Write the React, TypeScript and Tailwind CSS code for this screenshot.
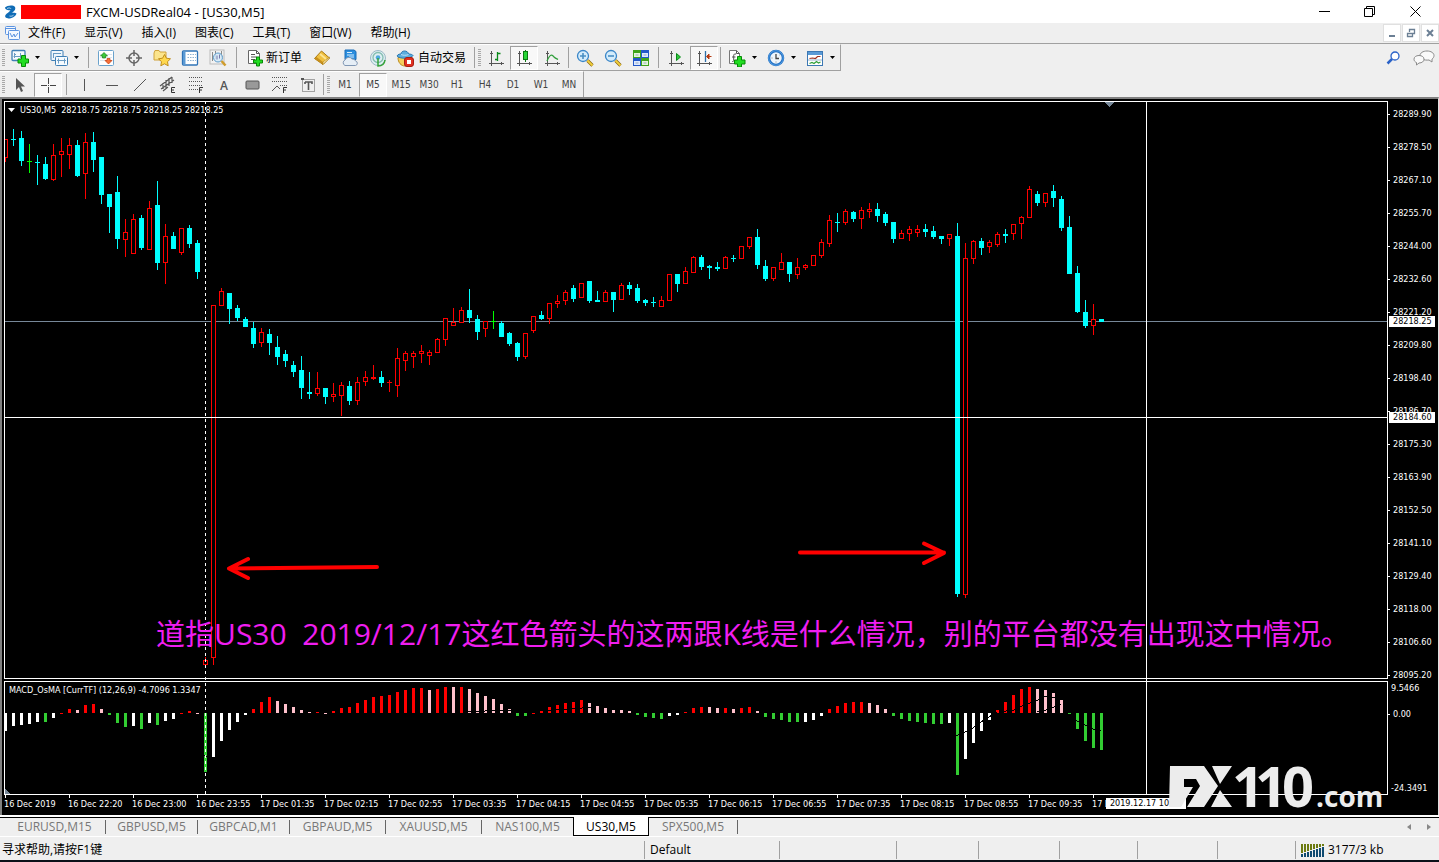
import React from 'react';

type Candle = [kind: 'c' | 'r' | 'g', high: number, top: number, bottom: number, low: number];
type Bar = [kind: 'w' | 'g' | 'r' | 'p', value: number];

const CANDLES: Candle[] = [
  ['r', 139, 139, 158, 162], ['c', 129, 139, 140, 146], ['c', 131, 138, 161, 166], ['g', 144, 161, 162, 173],
  ['c', 155, 162, 163, 185], ['c', 157, 164, 179, 180], ['r', 144, 155, 180, 181], ['r', 138, 151, 155, 177],
  ['r', 138, 145, 155, 169], ['c', 140, 145, 176, 177], ['r', 133, 142, 174, 199], ['c', 132, 142, 160, 172],
  ['c', 157, 157, 195, 204], ['c', 194, 194, 207, 233], ['c', 176, 192, 239, 249], ['r', 219, 232, 240, 257],
  ['r', 214, 219, 254, 254], ['c', 215, 218, 248, 250], ['r', 201, 208, 250, 250], ['c', 181, 205, 263, 270],
  ['r', 224, 236, 263, 284], ['c', 232, 236, 249, 249], ['r', 228, 228, 253, 255], ['c', 225, 228, 244, 248],
  ['c', 240, 243, 272, 279], ['r', 657, 660, 665, 665], ['r', 305, 305, 658, 665], ['r', 288, 291, 306, 306],
  ['c', 293, 293, 309, 324], ['c', 305, 308, 318, 321], ['c', 317, 319, 327, 327], ['c', 322, 328, 344, 348],
  ['r', 328, 332, 343, 347], ['c', 329, 334, 343, 355], ['c', 336, 347, 357, 365], ['c', 350, 354, 361, 367],
  ['c', 361, 365, 372, 377], ['c', 356, 370, 388, 399], ['c', 372, 392, 394, 399], ['r', 372, 388, 394, 396],
  ['c', 388, 388, 397, 404], ['r', 383, 394, 397, 402], ['r', 382, 385, 396, 416], ['c', 381, 386, 401, 405],
  ['r', 377, 382, 401, 405], ['r', 371, 377, 382, 386], ['r', 365, 377, 379, 380], ['c', 371, 377, 383, 387],
  ['r', 380, 382, 383, 392], ['r', 348, 358, 386, 397], ['r', 351, 353, 361, 371], ['r', 351, 353, 357, 368],
  ['r', 345, 351, 354, 363], ['r', 350, 352, 356, 365], ['r', 338, 339, 353, 353], ['r', 318, 318, 340, 346],
  ['r', 308, 322, 326, 326], ['r', 307, 310, 323, 323], ['c', 289, 310, 318, 323], ['c', 315, 319, 332, 340],
  ['r', 321, 321, 329, 337], ['g', 311, 321, 322, 329], ['c', 321, 323, 337, 337], ['c', 332, 333, 344, 346],
  ['c', 342, 343, 357, 361], ['r', 333, 333, 357, 359], ['r', 316, 316, 331, 333], ['c', 311, 315, 319, 320],
  ['r', 303, 303, 319, 324], ['r', 295, 301, 304, 308], ['r', 290, 292, 301, 305], ['c', 285, 288, 299, 302],
  ['r', 283, 283, 298, 298], ['c', 281, 281, 301, 303], ['c', 291, 300, 302, 302], ['r', 290, 292, 302, 302],
  ['c', 292, 292, 300, 312], ['r', 283, 285, 300, 300], ['c', 282, 285, 289, 295], ['c', 284, 288, 301, 303],
  ['c', 299, 300, 303, 306], ['c', 297, 302, 303, 307], ['r', 296, 300, 307, 307], ['r', 274, 274, 301, 301],
  ['c', 274, 274, 284, 292], ['r', 267, 271, 284, 284], ['r', 256, 257, 273, 273], ['c', 255, 257, 267, 270],
  ['c', 265, 266, 268, 279], ['c', 262, 267, 269, 271], ['r', 256, 257, 269, 269], ['c', 255, 258, 259, 262],
  ['r', 246, 246, 259, 259], ['r', 237, 237, 247, 249], ['c', 229, 237, 265, 269], ['c', 260, 266, 279, 281],
  ['r', 267, 267, 279, 281], ['r', 253, 262, 270, 270], ['c', 262, 262, 274, 282], ['r', 258, 267, 275, 279],
  ['r', 264, 265, 268, 270], ['r', 255, 255, 266, 266], ['r', 239, 242, 256, 258], ['r', 215, 220, 244, 247],
  ['c', 213, 222, 223, 232], ['r', 209, 211, 223, 225], ['c', 211, 212, 219, 222], ['r', 207, 210, 219, 229],
  ['r', 203, 209, 212, 218], ['c', 203, 209, 216, 222], ['c', 212, 214, 223, 226], ['c', 222, 222, 239, 243],
  ['r', 230, 233, 239, 239], ['r', 226, 229, 234, 241], ['r', 225, 229, 233, 237], ['c', 224, 229, 232, 237],
  ['c', 226, 231, 237, 239], ['c', 236, 236, 239, 244], ['r', 234, 234, 239, 246], ['c', 223, 236, 594, 597],
  ['r', 243, 258, 595, 598], ['r', 240, 241, 259, 264], ['c', 238, 241, 248, 255], ['r', 240, 242, 247, 253],
  ['r', 232, 234, 245, 247], ['c', 229, 234, 236, 243], ['r', 224, 224, 234, 240], ['r', 216, 217, 224, 239],
  ['r', 186, 189, 218, 218], ['c', 191, 194, 203, 206], ['r', 193, 193, 203, 207], ['c', 185, 191, 198, 207],
  ['c', 196, 199, 228, 231], ['c', 216, 227, 274, 274], ['c', 266, 273, 312, 313], ['c', 300, 312, 326, 328],
  ['r', 304, 319, 326, 335], ['c', 319, 319, 322, 322],
];

const BARS: Bar[] = [
  ['w', -18], ['w', -13], ['w', -12], ['w', -11], ['w', -9], ['g', -9], ['w', -5], ['r', 0], ['r', 4], ['p', 3],
  ['r', 8], ['r', 9], ['p', 4], ['g', -2], ['g', -10], ['g', -14], ['w', -13], ['g', -16], ['w', -10], ['g', -12],
  ['w', -8], ['w', -6], ['r', 0], ['r', 2], ['p', 0], ['g', -59], ['w', -44], ['w', -28], ['w', -17], ['w', -9],
  ['w', -2], ['r', 4], ['r', 11], ['r', 16], ['p', 12], ['p', 9], ['p', 6], ['p', 3], ['p', 1], ['r', 1],
  ['p', 0], ['r', 2], ['r', 5], ['r', 6], ['r', 10], ['r', 13], ['r', 16], ['r', 17], ['r', 18], ['r', 21],
  ['r', 23], ['r', 25], ['r', 25], ['p', 23], ['r', 24], ['r', 26], ['p', 26], ['r', 26], ['p', 24], ['p', 20],
  ['p', 17], ['p', 14], ['p', 9], ['p', 4], ['g', -3], ['g', -3], ['r', 0], ['r', 2], ['r', 6], ['r', 8],
  ['r', 10], ['r', 11], ['r', 13], ['p', 10], ['p', 7], ['p', 5], ['p', 3], ['p', 3], ['p', 2], ['g', -2],
  ['g', -4], ['g', -5], ['g', -6], ['w', -3], ['w', -2], ['r', 1], ['r', 5], ['r', 6], ['p', 6], ['p', 5],
  ['r', 5], ['p', 4], ['r', 5], ['r', 6], ['p', 2], ['g', -4], ['g', -6], ['g', -7], ['g', -9], ['g', -9],
  ['w', -9], ['w', -7], ['w', -3], ['r', 4], ['r', 7], ['r', 10], ['r', 11], ['r', 11], ['p', 10], ['p', 8],
  ['p', 4], ['g', -3], ['g', -6], ['g', -8], ['g', -9], ['g', -10], ['g', -11], ['g', -11], ['w', -10], ['g', -62],
  ['w', -46], ['w', -30], ['w', -18], ['w', -7], ['r', 3], ['r', 11], ['r', 18], ['r', 24], ['r', 26], ['p', 24],
  ['p', 23], ['p', 20], ['p', 13], ['g', -1], ['g', -16], ['g', -28], ['g', -35], ['g', -37],
];

const CANDLE_COLORS = { c: '#00ffff', r: '#ff0000', g: '#00ff00' };
const BAR_COLORS = { w: '#ffffff', g: '#32cd32', r: '#ff0000', p: '#ffc0cb' };

const PRICES = [
  '28289.90', '28278.50', '28267.10', '28255.70', '28244.00', '28232.60', '28221.20', '28209.80', '28198.40',
  '28186.70', '28175.30', '28163.90', '28152.50', '28141.10', '28129.40', '28118.00', '28106.60', '28095.20',
];

const TIMES = [
  '16 Dec 2019', '16 Dec 22:20', '16 Dec 23:00', '16 Dec 23:55', '17 Dec 01:35', '17 Dec 02:15', '17 Dec 02:55',
  '17 Dec 03:35', '17 Dec 04:15', '17 Dec 04:55', '17 Dec 05:35', '17 Dec 06:15', '17 Dec 06:55', '17 Dec 07:35',
  '17 Dec 08:15', '17 Dec 08:55', '17 Dec 09:35', '17 Dec 10:15',
];

const MENUS = ['文件(F)', '显示(V)', '插入(I)', '图表(C)', '工具(T)', '窗口(W)', '帮助(H)'];
const PERIODS = ['M1', 'M5', 'M15', 'M30', 'H1', 'H4', 'D1', 'W1', 'MN'];

const TABS = [
  { name: 'EURUSD,M15', width: 'w-[102px]' },
  { name: 'GBPUSD,M5', width: 'w-[92px]' },
  { name: 'GBPCAD,M1', width: 'w-[92px]' },
  { name: 'GBPAUD,M5', width: 'w-[96px]' },
  { name: 'XAUUSD,M5', width: 'w-[96px]' },
  { name: 'NAS100,M5', width: 'w-[91px]' },
  { name: 'US30,M5', width: 'w-[76px]' },
  { name: 'SPX500,M5', width: 'w-[89px]' },
];

const STATUS_CELLS = ['w-[117px]', 'w-[82px]', 'w-[81px]', 'w-[78px]', 'w-[80px]', 'w-[78px]'];

const PRESSED = 'border border-[#a0a0a0] border-r-white border-b-white bg-[#f8f8f8]';

/* ---------- icons ---------- */

function Icon({ children, size = 18 }: { children: React.ReactNode; size?: number }) {
  return (
    <svg width={size} height={size} viewBox="0 0 18 18" fill="none" className="shrink-0" aria-hidden="true">
      {children}
    </svg>
  );
}

function Plus({ x, y }: { x: number; y: number }) {
  return (
    <path
      d={`M${x + 3.5} ${y + 0.5}h3v3h3v3h-3v3h-3v-3h-3v-3h3z`}
      fill="#22dd22"
      stroke="#078a07"
    />
  );
}

function Caret() {
  return (
    <svg width="5" height="3" viewBox="0 0 5 3" className="shrink-0" aria-hidden="true">
      <path d="M0 0h5L2.5 3z" fill="#000" />
    </svg>
  );
}

function Axes() {
  return (
    <g stroke="#555" strokeWidth="1">
      <path d="M4.500 2v15M2 14.500h15" />
      <path d="M3 4.500h3M14.500 13v3" />
    </g>
  );
}

const icons = {
  newChart: (
    <Icon>
      <rect x="1" y="1.500" width="13" height="10" rx="1" fill="#f4f9fd" stroke="#3f7fb5" strokeWidth="1.300" />
      <path d="M3.500 4v5M2.500 7.500h9M9.500 4v5M3 5.500h2" stroke="#6a9cc4" />
      <path d="M10.500 6.500h4v3.500h3v4h-3v3.500h-4V14H7v-4h3.500z" fill="#22dd22" stroke="#078a07" />
    </Icon>
  ),
  profiles: (
    <Icon>
      <rect x="1" y="1.500" width="12" height="10" rx="1" fill="#eef6fc" stroke="#3f7fb5" />
      <path d="M3 4.500h8M3.500 4v5" stroke="#6a9cc4" />
      <rect x="5.500" y="7.500" width="12" height="9" rx="1" fill="#f6fbff" stroke="#3f7fb5" />
      <path d="M7 11.500h9M8.500 9.500v5M14.500 9.500v5" stroke="#6a9cc4" />
    </Icon>
  ),
  market: (
    <Icon>
      <rect x="1.500" y="1.500" width="15" height="15" rx="1" fill="#fff" stroke="#6aa2cc" />
      <path d="M3 5.500h12M3 8.500h12M3 11.500h12" stroke="#dce6ee" />
      <path d="M7 3.500l3.500 3.500H8.500v2h-3V7H3.500z" fill="#3cc83c" stroke="#15801a" strokeWidth=".7" />
      <path d="M11.500 15L8 11.500H10V9.500h3v2h2z" fill="#f87038" stroke="#c03a10" strokeWidth=".7" />
    </Icon>
  ),
  crosshair: (
    <Icon>
      <circle cx="9" cy="9" r="5" stroke="#666" strokeWidth="1.500" />
      <path d="M9 1v6M9 11v6M1 9h6M11 9h6" stroke="#666" strokeWidth="1.500" />
    </Icon>
  ),
  favorites: (
    <Icon>
      <path d="M1 4l1-2.500h4L7 3h6v8H1z" fill="#fbe48c" stroke="#cfa23b" />
      <path d="M11.500 5.500l1.900 3.700 4.100.6-3 2.900.7 4.100-3.700-2-3.700 2 .7-4.100-3-2.900 4.100-.6z" fill="#ffd84e" stroke="#b98512" strokeWidth=".9" />
    </Icon>
  ),
  terminal: (
    <Icon>
      <rect x="1.500" y="2" width="15" height="14" rx="1" fill="#fff" stroke="#2f74b8" strokeWidth="1.300" />
      <rect x="2" y="2.500" width="2.500" height="13" fill="#5b9ad4" />
      <path d="M6.500 5.500h8.500M6.500 8.500h8.500M6.500 11.500h8.500" stroke="#8fb3d3" strokeDasharray="1.500 1" />
    </Icon>
  ),
  tester: (
    <Icon>
      <rect x="1" y="1" width="14" height="14" fill="#f2f2f2" stroke="#bbb" />
      <path d="M3.500 3v9M6.500 2v8M12.500 2v7" stroke="#8a8a8a" />
      <circle cx="9" cy="8.500" r="4.500" fill="#d5ebfa" fillOpacity=".85" stroke="#5c9bc9" />
      <path d="M8 6.500v4M10.500 5.500v4" stroke="#77a" />
      <path d="M12.500 12l4 4.500" stroke="#cf9c2c" strokeWidth="2.500" />
    </Icon>
  ),
  order: (
    <Icon>
      <path d="M2.500 1.500h8l3 3v10h-11z" fill="#fff" stroke="#666" />
      <path d="M10.500 1.500v3h3M5 5.500h4M5 8h6M5 10.500h4" stroke="#555" />
      <Plus x={7} y={7.500} />
    </Icon>
  ),
  book: (
    <Icon>
      <path d="M1.500 9.500l7-7.500 8 7-6.500 6.500z" fill="#f0c040" stroke="#a97a12" />
      <path d="M1.500 9.500l8.500 6v-2.500L3.500 8z" fill="#c8901c" />
      <path d="M10 15.500l6.500-6.500v-1L10 13z" fill="#fff1b8" stroke="#a97a12" strokeWidth=".6" />
      <path d="M7 5l6 5" stroke="#fbe493" strokeWidth="2" />
    </Icon>
  ),
  cloud: (
    <Icon>
      <path d="M4 1h9l2 1.500v8H4z" fill="#2b8ede" stroke="#1a6cb8" />
      <path d="M6 3.500h5M6 6h7M8 8h5" stroke="#d9efff" />
      <path d="M4 16.500a3 3 0 0 1 0-5.500 4 4 0 0 1 7-1 3 3 0 0 1 3.500 2 2.300 2.300 0 0 1 0 4.500z" fill="#e6eef6" stroke="#8097b4" />
    </Icon>
  ),
  signal: (
    <Icon>
      <circle cx="9" cy="9" r="7.500" fill="#dfeff2" stroke="#9bb9c6" />
      <circle cx="9" cy="8.500" r="5" stroke="#84bdb0" strokeWidth="1.300" />
      <circle cx="9" cy="8.500" r="2.300" fill="#4fa9de" />
      <path d="M9 9v8c4 0 6.500-2 7-6" stroke="#35a339" strokeWidth="1.500" />
    </Icon>
  ),
  auto: (
    <Icon>
      <path d="M2 8.500c0 5 3 8.500 7 8.500s7-3 7-8.500z" fill="#f5cf5c" stroke="#b98a20" />
      <path d="M1 7c1-2 3-2 4-2 0-4 7-4 7.500 0 2 0 4 .5 4.500 1.500-1 3-13 4-16 .5z" fill="#5badde" stroke="#2a78b4" />
      <path d="M5 5.500c2 1 5.500 1 7.500 0" stroke="#bfe2f8" />
      <rect x="8.500" y="8.500" width="9" height="9" rx="2.500" fill="#e03020" stroke="#a81c10" />
      <rect x="11" y="11" width="4" height="4" fill="#fff" />
    </Icon>
  ),
  bars: (
    <Icon>
      <Axes />
      <path d="M10.500 3v9M10.500 4.500h3M8 10.500h3" stroke="#0a8a1a" strokeWidth="1.300" />
    </Icon>
  ),
  candles: (
    <Icon>
      <Axes />
      <path d="M10.500 1v12" stroke="#0a7a12" />
      <rect x="8.500" y="2.500" width="4" height="8" fill="#27d636" stroke="#0a7a12" />
    </Icon>
  ),
  line: (
    <Icon>
      <Axes />
      <path d="M4 12c3-7 5-7 7-4 1.500 1.500 3 2 4 2.500" stroke="#2f9e3a" strokeWidth="1.300" />
    </Icon>
  ),
  zoomIn: (
    <Icon>
      <circle cx="7" cy="7" r="5.500" fill="#d4ecfb" stroke="#3a86c8" strokeWidth="1.300" />
      <path d="M7 4v6M4 7h6" stroke="#4a8fc4" strokeWidth="1.600" />
      <path d="M11.500 11.500l5 5" stroke="#8a6510" strokeWidth="3.200" />
      <path d="M11.500 11.500l5 5" stroke="#f2d03c" strokeWidth="1.800" />
    </Icon>
  ),
  zoomOut: (
    <Icon>
      <circle cx="7" cy="7" r="5.500" fill="#d4ecfb" stroke="#3a86c8" strokeWidth="1.300" />
      <path d="M4 7h6" stroke="#4a8fc4" strokeWidth="1.600" />
      <path d="M11.500 11.500l5 5" stroke="#8a6510" strokeWidth="3.200" />
      <path d="M11.500 11.500l5 5" stroke="#f2d03c" strokeWidth="1.800" />
    </Icon>
  ),
  tile: (
    <Icon>
      <path d="M1 1h8v8H1zM9 9h8v8H9z" fill="#3fa31c" />
      <path d="M9 1h8v8H9zM1 9h8v8H1z" fill="#2358c8" />
      <path d="M2 4h6v4H2zM10 12h6v4h-6z" fill="#e3f6dc" />
      <path d="M10 4h6v4h-6zM2 12h6v4H2z" fill="#dce8ff" />
      <path d="M3.500 6h3M11.500 6h3M3.500 14h3M11.500 14h3" stroke="#9ab" />
    </Icon>
  ),
  autoScroll: (
    <Icon>
      <Axes />
      <path d="M9.500 4.500l4 3.500-4 3.500z" fill="#2fc93c" stroke="#0a8a1a" />
    </Icon>
  ),
  shift: (
    <Icon>
      <Axes />
      <path d="M10.500 2v11" stroke="#2d6fa8" strokeWidth="1.300" />
      <path d="M16.500 7.500H12M14 5l-2.500 2.500L14 10z" stroke="#b53a12" fill="#b53a12" />
    </Icon>
  ),
  indicator: (
    <Icon>
      <path d="M1.500 1.500h7l3 3v10h-10z" fill="#fff" stroke="#777" />
      <path d="M8.500 1.500v3h3M8 5H7c-1.300 0-1.300 1-1.300 2v4.500c0 1-.5 1-1.500 1M4 8h3.500" stroke="#555" />
      <path d="M9.500 7.500h4V11H17v4h-3.500v3h-4v-3H6.500v-4h3z" fill="#22dd22" stroke="#078a07" />
    </Icon>
  ),
  clock: (
    <Icon>
      <circle cx="9" cy="9" r="7" fill="#eef5fb" stroke="#1f6fc4" strokeWidth="2.500" />
      <circle cx="9" cy="9" r="7.300" stroke="#6ab0ee" strokeWidth=".7" />
      <path d="M9 5v4.500h3" stroke="#444" strokeWidth="1.300" />
      <path d="M4.500 9h1M12.500 6l.7-.6M9 13.500v-1" stroke="#888" />
    </Icon>
  ),
  template: (
    <Icon>
      <rect x="1.500" y="2.500" width="15" height="14" fill="#fff" stroke="#3c78b4" />
      <path d="M2 3h14v3H2z" fill="#5a9ad6" />
      <path d="M3.500 9.500l3-.5 3 .500 2-2 3 0" stroke="#a03020" strokeWidth="1.200" />
      <path d="M2 11h14" stroke="#9bb6cf" />
      <path d="M3.500 14.500l2.500-1 2 1 2.500-2 2 1.500 2-1" stroke="#2f9e3a" strokeWidth="1.200" />
    </Icon>
  ),
  cursor: (
    <Icon>
      <path d="M5 2v12l3-3 2 5 2-1-2-4.500h4z" fill="#555" />
    </Icon>
  ),
  cross: (
    <Icon>
      <path d="M9.500 2v6M9.500 11v6M2 9.500h6M11 9.500h6" stroke="#444" />
      <path d="M9 9h1v1H9z" fill="#444" />
    </Icon>
  ),
  vline: <Icon><path d="M9.500 3v12" stroke="#555" /></Icon>,
  hline: <Icon><path d="M3 9.500h12" stroke="#555" /></Icon>,
  trend: <Icon><path d="M3 15L15 3" stroke="#555" /></Icon>,
  channel: (
    <Icon>
      <path d="M1 10L13 1M2 13L15 4M4 15l5-4M4 7v6M7 4v8M10 2v8M13 1v6" stroke="#555" strokeWidth="1.200" />
      <path d="M16 11.500h-3.500v5H16M12.500 14H15" stroke="#333" />
    </Icon>
  ),
  fibo: (
    <Icon>
      <path d="M2 1.500h14M2 5.500h14M2 9.500h14M2 13.500h9" stroke="#555" strokeDasharray="1 1" />
      <path d="M16 11.500h-3.500V17M12.500 14H15" stroke="#333" />
    </Icon>
  ),
  label: (
    <Icon>
      <text x="5" y="14" fontSize="12" fontWeight="600" fontFamily="Open Sans" fill="#555">A</text>
    </Icon>
  ),
  rect: <Icon><rect x="3" y="5" width="13" height="8" rx="1" fill="#999" stroke="#555" /></Icon>,
  fiboExp: (
    <Icon>
      <path d="M1 1.500h15M1 5.500h15" stroke="#555" strokeDasharray="1 1" />
      <path d="M1 15l5-5 3 3" stroke="#555" />
      <path d="M9 9.500h7" stroke="#555" strokeDasharray="1 1" />
      <path d="M16 11.500h-3.500V17M12.500 14H15" stroke="#333" />
    </Icon>
  ),
  text: (
    <Icon>
      <rect x="3.500" y="3.500" width="12" height="12" stroke="#555" strokeDasharray="1 1" />
      <path d="M2 2h3v2H2z" fill="#555" />
      <path d="M6 6h7v2M9.500 6v8M6 8V6" stroke="#555" strokeWidth="1.600" />
    </Icon>
  ),
};

/* ---------- toolbar pieces ---------- */

function Grip() {
  return (
    <span className="flex w-[6px] shrink-0 justify-center self-stretch py-1">
      <span className="w-[3px] bg-[repeating-linear-gradient(to_bottom,#a8a8a8_0_1px,#efefef_1px_2px)]" />
    </span>
  );
}

function Divider({ className }: { className: string }) {
  return (
    <span className={`flex shrink-0 justify-center self-stretch py-0.5 ${className}`}>
      <span className="w-px bg-[#a0a0a0]" />
    </span>
  );
}

function ToolButton({ label, pressed, children }: { label: string; pressed?: boolean; children: React.ReactNode }) {
  return (
    <button
      type="button"
      aria-label={label}
      aria-pressed={pressed}
      className={`flex h-6 w-7 shrink-0 items-center justify-center ${pressed ? PRESSED : ''}`}
    >
      {children}
    </button>
  );
}

function MenuButton({ label, children }: { label: string; children: React.ReactNode }) {
  return (
    <button type="button" aria-label={label} className="flex h-6 w-[39px] shrink-0 items-center gap-1.5 pl-[5px]">
      {children}
      <Caret />
    </button>
  );
}

function TitleBar() {
  return (
    <header className="flex h-[23px] items-center bg-white pl-1">
      <svg width="13" height="14" viewBox="0 0 13 14" aria-hidden="true">
        <path d="M1 2.500C3 .5 9-.5 11 2c1.200 3-1.500 4.500-3.500 6 2.500-.5 4.500 0 5 .5-1 3.500-5 5-8 5-3-.5-4-1.500-3-3.500 1-1.500 4-3 5-5C4.500 5.500 1 5 1 2.500z" fill="#0f6cb6" />
        <path d="M3 3.500c1.500-.8 3.500-.8 4 .3M5.500 11c1.500.5 3 0 4-.8" stroke="#fff" strokeWidth=".7" fill="none" />
      </svg>
      <span className="ml-1 h-[14px] w-[60px] bg-[#ff0000]" />
      <h1 className="ml-[5px] text-[13px] leading-4 text-black">FXCM-USDReal04 - [US30,M5]</h1>
      <div className="ml-auto flex">
        <button type="button" aria-label="最小化" className="flex h-[22px] w-[46px] items-center justify-center">
          <svg width="11" height="11"><path d="M0 5.500h11" stroke="#000" /></svg>
        </button>
        <button type="button" aria-label="还原" className="flex h-[22px] w-[44px] items-center justify-center">
          <svg width="11" height="11" fill="none"><path d="M.5 2.500h8v8h-8zM2.500 2.500v-2h8v8h-2" stroke="#000" /></svg>
        </button>
        <button type="button" aria-label="关闭" className="flex h-[22px] w-[48px] items-center justify-center">
          <svg width="11" height="11"><path d="M.5.5l10 10M10.500.5l-10 10" stroke="#000" /></svg>
        </button>
      </div>
    </header>
  );
}

function MenuBar() {
  const box = 'flex h-[18px] w-[18px] items-center justify-center border border-[#e0e0e0] bg-white';
  return (
    <nav className="flex h-5 items-center pl-[5px]">
      <svg width="15" height="15" viewBox="0 0 15 15" fill="none" aria-hidden="true">
        <rect x=".5" y=".5" width="10" height="8" rx="1" fill="#f3f8ff" stroke="#5d94e0" />
        <path d="M1 2.500h9" stroke="#5d94e0" />
        <rect x="3.500" y="4.500" width="11" height="9" rx="1" fill="#f3f8ff" stroke="#5d94e0" />
        <path d="M5 7l2 4 2-3 1 3 3-4" stroke="#5d94e0" />
      </svg>
      <div className="ml-2 flex gap-[19px]">
        {MENUS.map((menu) => (
          <button key={menu} type="button" className="text-xs leading-5 whitespace-nowrap">{menu}</button>
        ))}
      </div>
      <div className="ml-auto flex gap-px">
        <button type="button" aria-label="最小化图表" className={box}>
          <svg width="10" height="10"><path d="M2 8h6" stroke="#6b7f94" strokeWidth="2" /></svg>
        </button>
        <button type="button" aria-label="还原图表" className={box}>
          <svg width="10" height="10" fill="none">
            <path d="M1.500 5.500h5v3h-5zM3.500 4V1.500h5v4H7M3 1.500h6M1 5.500h6" stroke="#6b7f94" strokeWidth="1.300" />
          </svg>
        </button>
        <button type="button" aria-label="关闭图表" className={box}>
          <svg width="10" height="10"><path d="M2 2l6 6M8 2L2 8" stroke="#6b7f94" strokeWidth="2" /></svg>
        </button>
      </div>
    </nav>
  );
}

function MainToolbar() {
  return (
    <div className="flex h-7 items-center border-t border-[#a0a0a0]">
      <div className="flex h-full items-center border-t border-r border-b border-t-white border-r-[#a0a0a0] border-b-[#a0a0a0]">
        <Grip />
        <MenuButton label="新图表">{icons.newChart}</MenuButton>
        <MenuButton label="配置文件">{icons.profiles}</MenuButton>
        <Divider className="w-2" />
        <ToolButton label="市场报价">{icons.market}</ToolButton>
        <ToolButton label="数据窗口">{icons.crosshair}</ToolButton>
        <ToolButton label="导航">{icons.favorites}</ToolButton>
        <ToolButton label="终端">{icons.terminal}</ToolButton>
        <ToolButton label="策略测试">{icons.tester}</ToolButton>
        <Divider className="w-2" />
        <button type="button" className="flex h-6 w-[68px] shrink-0 items-center gap-0.5 pl-1.5 text-xs whitespace-nowrap">
          {icons.order}新订单
        </button>
        <ToolButton label="编辑器">{icons.book}</ToolButton>
        <ToolButton label="云服务">{icons.cloud}</ToolButton>
        <ToolButton label="信号">{icons.signal}</ToolButton>
        <button type="button" className="flex h-6 w-[80px] shrink-0 items-center gap-1 pl-1 text-xs whitespace-nowrap">
          {icons.auto}自动交易
        </button>
        <Divider className="w-1" />
        <Grip />
        <ToolButton label="柱状图">{icons.bars}</ToolButton>
        <ToolButton label="蜡烛图" pressed>{icons.candles}</ToolButton>
        <ToolButton label="折线图">{icons.line}</ToolButton>
        <Divider className="w-[5px]" />
        <ToolButton label="放大">{icons.zoomIn}</ToolButton>
        <ToolButton label="缩小">{icons.zoomOut}</ToolButton>
        <ToolButton label="平铺窗口">{icons.tile}</ToolButton>
        <Divider className="w-[7px]" />
        <ToolButton label="自动滚动">{icons.autoScroll}</ToolButton>
        <ToolButton label="图表平移" pressed>{icons.shift}</ToolButton>
        <Divider className="w-[5px]" />
        <MenuButton label="指标列表">{icons.indicator}</MenuButton>
        <MenuButton label="时间周期">{icons.clock}</MenuButton>
        <MenuButton label="模板">{icons.template}</MenuButton>
      </div>
      <div className="ml-auto flex items-center gap-3 pr-1">
        <button type="button" aria-label="搜索">
          <svg width="15" height="14" viewBox="0 0 15 14" fill="none">
            <circle cx="9" cy="5" r="4" fill="#fff" stroke="#2a62c8" strokeWidth="1.300" />
            <path d="M6 8l-4.500 4.500" stroke="#2a62c8" strokeWidth="2.500" />
          </svg>
        </button>
        <button type="button" aria-label="消息">
          <svg width="22" height="16" viewBox="0 0 22 16" fill="#fafafa" stroke="#8a8a8a">
            <path d="M14 1c4 0 7 2 7 4.500 0 1.500-1 3-2 3.500v3l-3-2c-5 .5-9-1-9-4.500C7 3 10 1 14 1z" />
            <path d="M6 5.500c3 0 5 1.500 5 3.700S9 13 6 13l-2.500 2v-2.500C2 12 1 10.700 1 9.200 1 7 3 5.500 6 5.500z" />
          </svg>
        </button>
      </div>
    </div>
  );
}

function DrawToolbar() {
  return (
    <div className="flex h-[26px] items-center">
      <div className="flex h-full items-center border-t border-r border-t-white border-r-[#a0a0a0]">
        <Grip />
        <ToolButton label="光标">{icons.cursor}</ToolButton>
        <ToolButton label="十字准线" pressed>{icons.cross}</ToolButton>
        <Divider className="w-2" />
        <ToolButton label="垂直线">{icons.vline}</ToolButton>
        <ToolButton label="水平线">{icons.hline}</ToolButton>
        <ToolButton label="趋势线">{icons.trend}</ToolButton>
        <ToolButton label="等距通道">{icons.channel}</ToolButton>
        <ToolButton label="斐波那契">{icons.fibo}</ToolButton>
        <ToolButton label="文字">{icons.label}</ToolButton>
        <ToolButton label="矩形">{icons.rect}</ToolButton>
        <ToolButton label="斐波那契扩展">{icons.fiboExp}</ToolButton>
        <ToolButton label="文字标签">{icons.text}</ToolButton>
        <Divider className="w-[3px]" />
        <Grip />
        {PERIODS.map((period) => (
          <button
            key={period}
            type="button"
            className={`h-6 w-7 shrink-0 font-['DejaVu_Sans_Condensed','Open_Sans',sans-serif] text-[10px] text-[#444] ${period === 'M5' ? PRESSED : ''}`}
          >
            {period}
          </button>
        ))}
      </div>
    </div>
  );
}

/* ---------- chart ---------- */

function PricePlot() {
  return (
    <svg className="absolute inset-0 h-full w-full" shapeRendering="crispEdges" aria-hidden="true">
      <rect x="0" y="219" width="100%" height="1" fill="#778899" />
      <g transform="translate(-5 -102)">
        {CANDLES.map(([kind, high, top, bottom, low], i) => {
          const x = 5 + i * 8;
          const color = CANDLE_COLORS[kind];
          return (
            <g key={i} fill={color}>
              <rect x={x} y={high} width="1" height={low - high} />
              <rect x={x - 2} y={top} width="5" height={bottom - top} />
              {kind === 'r' && bottom - top > 2 && (
                <rect x={x - 1} y={top + 1} width="3" height={bottom - top - 2} fill="#000" />
              )}
            </g>
          );
        })}
        <path d="M1105 102h9l-4.500 5z" fill="#778899" />
        <g stroke="#ff0000" strokeWidth="4" fill="none" strokeLinecap="round" strokeLinejoin="round" shapeRendering="auto">
          <path d="M377 567L229 568.500M248 559L229 568.500L248 578" />
          <path d="M800 552.500H944M924 543.500L944 553L924 563" />
        </g>
      </g>
    </svg>
  );
}

function IndicatorPlot() {
  return (
    <svg className="absolute inset-0 h-full w-full" shapeRendering="crispEdges" aria-hidden="true">
      <g transform="translate(-5 -682)">
        {BARS.map(([kind, value], i) => (
          <rect
            key={i}
            x={4 + i * 8}
            y={value > 0 ? 713 - value : 713}
            width="3"
            height={Math.max(Math.abs(value), 1)}
            fill={BAR_COLORS[kind]}
          />
        ))}
        {/* signal line, only visible where it crosses the bars */}
        <g fill="none" stroke="#000">
          <path d="M203 755.500L208 757" />
          <path d="M465 711.500h16l8-1h24l12 1M540 710.500l24-1 24-2h8" />
          <path d="M950 729l6 7 9-4 8-4 8-6 8-5 8-5" />
          <path d="M1000 711.500l13-1 8-4 8-3 8-3 8-4 12 1M1037 712l8-1.500 8-3 8-3M1069 716l8 5 8 4 8 4 8 2" />
        </g>
        <path d="M5 789l5 5H5z" fill="#778899" />
      </g>
    </svg>
  );
}

function PriceAxis() {
  return (
    <div className="relative w-[50px] shrink-0 text-[9px] text-white">
      <div className="-mt-[3px]">
        {PRICES.map((price) => (
          <div key={price} className="flex h-[33px] items-center">
            <span className="mr-[3px] h-px w-0.5 bg-white" />
            {price}
          </div>
        ))}
      </div>
      <span className="absolute top-[581px] left-[3px] leading-3">9.5466</span>
      <span className="absolute top-[607px] left-0 flex items-center gap-[3px] leading-3">
        <span className="h-px w-0.5 bg-white" />
        0.00
      </span>
      <span className="absolute top-[681px] left-[3px] leading-3">-24.3491</span>
      <span className="absolute top-[215px] left-px h-[11px] w-[46px] bg-white pl-1 leading-[11px] text-black">28218.25</span>
      <span className="absolute top-[311px] left-px h-[11px] w-[46px] bg-white pl-1 leading-[11px] text-black">28184.60</span>
    </div>
  );
}

function Watermark() {
  return (
    <svg
      width="218"
      height="48"
      viewBox="1167 763 218 48"
      className="absolute right-[52px] bottom-1"
      fill="#ececec"
      role="img"
      aria-label="FX110.com"
    >
      <path d="M1169 766h34l14 20-14 21h-17l13-21-4-7h-12v8h9l-12 20h-12z" />
      <path d="M1211 766h20l-12 18zM1219 790l12 17h-21z" />
      <g fontFamily="Open Sans" fontWeight="700">
        <text x="1231" y="807" fontSize="56">1</text>
        <text x="1254" y="807" fontSize="56">1</text>
        <text x="1281" y="807" fontSize="56">0</text>
        <text x="1315" y="807" fontSize="28">.com</text>
      </g>
    </svg>
  );
}

function ChartWindow() {
  return (
    <main className="relative flex border-t-2 border-r border-l-2 border-t-[#808080] border-r-[#e0e0e0] border-l-[#808080] bg-black pt-0.5 pl-0.5 font-['DejaVu_Sans_Condensed','Open_Sans','Noto_Sans_CJK_SC',sans-serif]">
      <div className="min-w-0 flex-1">
        <div className="relative overflow-hidden">
          <div className="relative h-[578px] border border-white">
            <PricePlot />
            <h2 className="absolute top-[2px] left-[3px] flex items-center gap-[5px] text-[9px] leading-3 whitespace-pre text-white">
              <svg width="7" height="4" aria-hidden="true"><path d="M0 0h7L3.500 4z" fill="#fff" /></svg>
              {'US30,M5  28218.75 28218.75 28218.25 28218.25'}
            </h2>
          </div>
          <div className="relative mt-0.5 h-[114px] border border-white">
            <IndicatorPlot />
            <h2 className="absolute top-[2px] left-1 text-[9px] leading-3 text-white">
              MACD_OsMA [CurrTF] (12,26,9) -4.7096 1.3347
            </h2>
          </div>
          {/* day separator and crosshair */}
          <span className="absolute top-0 left-[201px] h-full w-px bg-[repeating-linear-gradient(to_bottom,#fff_0_3px,transparent_3px_6px)]" />
          <span className="absolute top-[316px] left-0 h-px w-full bg-white" />
          <span className="absolute top-0 left-[1142px] h-full w-px bg-white" />
          <p className="absolute top-[512px] left-[152px] font-['Open_Sans','Noto_Sans_CJK_SC',sans-serif] text-[29px] leading-[42px] whitespace-pre text-[#f01ef0]">
            道指<span className="text-[30px]">{'US30  2019/12/17'}</span>
            这红色箭头的这两跟<span className="text-[30px]">K</span>
            线是什么情况，别的平台都没有出现这中情况。
          </p>
        </div>
        <div className="relative h-5 overflow-hidden">
          <div className="flex text-[9px] text-white">
            {TIMES.map((time) => (
              <div key={time} className="w-16 shrink-0 whitespace-nowrap">
                <div className="ml-px h-[3px] w-px bg-white" />
                <div className="leading-3">{time}</div>
              </div>
            ))}
          </div>
          <span className="absolute top-[3px] left-[1102px] h-[11px] w-20 bg-white text-center text-[9px] leading-[11px] text-black">
            2019.12.17 10:50
          </span>
        </div>
      </div>
      <PriceAxis />
      <Watermark />
    </main>
  );
}

function ChartTabs() {
  return (
    <div className="border-t-2 border-white">
      <div className="flex h-[20px] items-start border-t border-b border-black border-b-white pl-1">
        {TABS.map(({ name, width }) =>
          name === 'US30,M5' ? (
            <button
              key={name}
              type="button"
              className={`-mt-px h-[19px] shrink-0 border border-t-0 border-black bg-white text-xs leading-[19px] text-black ${width}`}
            >
              {name}
            </button>
          ) : (
            <button key={name} type="button" className={`flex h-[18px] shrink-0 items-center text-xs leading-[18px] text-[#777] ${width}`}>
              <span className="flex-1 text-center">{name}</span>
              {name !== 'NAS100,M5' && <span className="h-[14px] w-px bg-[#666]" />}
            </button>
          ),
        )}
        <div className="ml-auto flex h-full items-center gap-4 pr-2">
          <button type="button" aria-label="向左滚动">
            <svg width="4" height="6"><path d="M4 0v6L0 3z" fill="#888" /></svg>
          </button>
          <button type="button" aria-label="向右滚动">
            <svg width="4" height="6"><path d="M0 0v6l4-3z" fill="#888" /></svg>
          </button>
        </div>
      </div>
    </div>
  );
}

function StatusBar() {
  return (
    <footer className="flex h-[25px] items-center border-b-2 border-[#0b1018] pt-[3px] text-xs text-black">
      <span className="min-w-0 flex-1 pl-0.5">寻求帮助,请按F1键</span>
      <span className="h-[18px] w-[135px] border-l border-[#a0a0a0] pl-[5px] leading-[18px]">Default</span>
      {STATUS_CELLS.map((width, i) => (
        <span key={i} className={`h-[18px] border-l border-[#a0a0a0] ${width}`} />
      ))}
      <span className="flex h-[18px] w-[144px] items-center gap-1 border-l border-[#a0a0a0] pl-[5px]">
        <svg width="23" height="13" shapeRendering="crispEdges" aria-hidden="true">
          {[0, 1, 2, 3, 4, 5, 6, 7].map((i) => (
            <g key={i}>
              <rect x={i * 3} y="0" width="2" height={9 - i} fill="#6b7a10" />
              <rect x={i * 3} y={10 - i} width="2" height={3 + i} fill="#0f4a70" />
            </g>
          ))}
        </svg>
        3177/3 kb
      </span>
    </footer>
  );
}

export default function App() {
  return (
    <div className="flex min-h-screen w-full flex-col overflow-hidden bg-[#efefef] font-['Open_Sans','Noto_Sans_CJK_SC',sans-serif] text-black">
      <TitleBar />
      <MenuBar />
      <MainToolbar />
      <DrawToolbar />
      <ChartWindow />
      <ChartTabs />
      <StatusBar />
    </div>
  );
}
